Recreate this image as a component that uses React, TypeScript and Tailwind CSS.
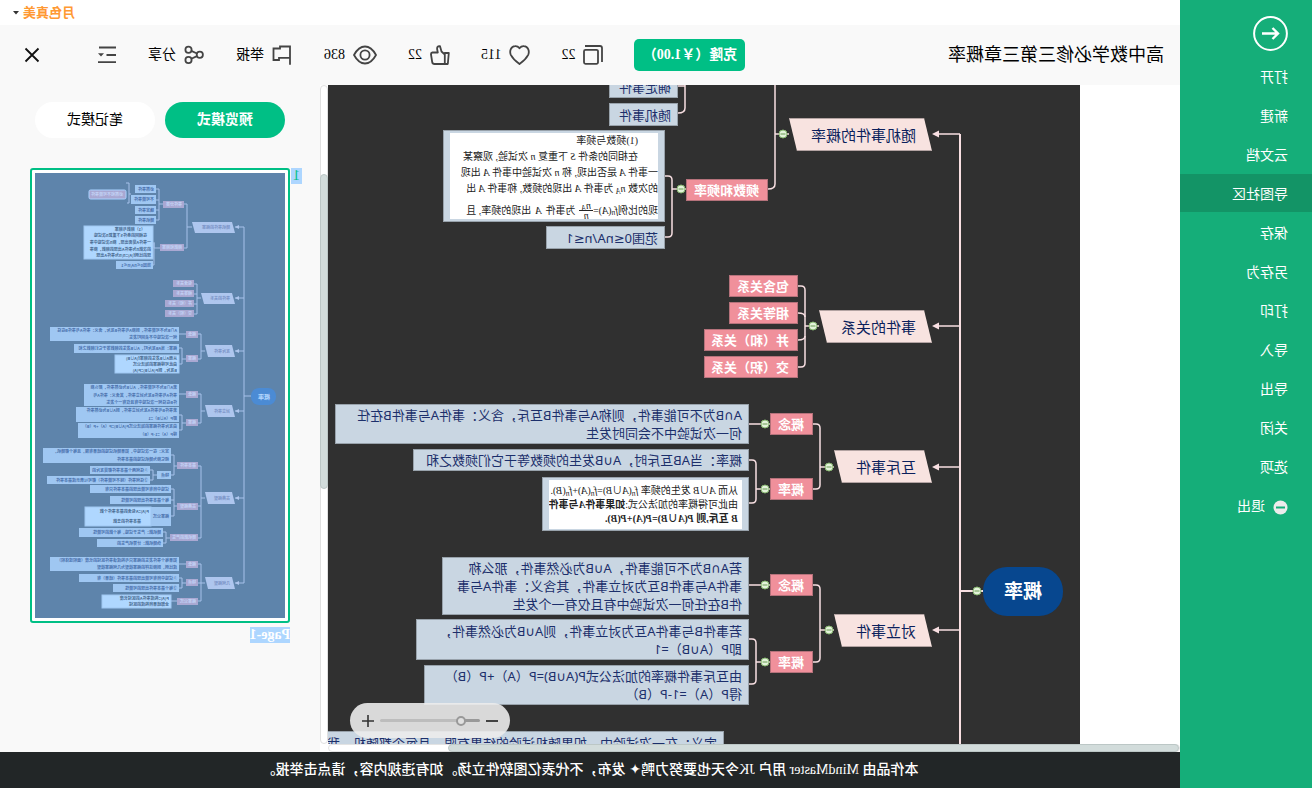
import type { ReactNode } from "react";

const menuItems = ["打开", "新建", "云文档", "导图社区", "保存", "另存为", "打印", "导入", "导出", "关闭", "选项"];

type Kind = "branch" | "pink" | "blue";
type MapNode = { kind: Kind; x: number; y: number; w: number; h: number; lines: string[] };

const nodes: MapNode[] = [
  { kind: "branch", x: 148, y: 33, w: 143, h: 33, lines: ["随机事件的概率"] },
  { kind: "branch", x: 148, y: 225, w: 113, h: 33, lines: ["事件的关系"] },
  { kind: "branch", x: 148, y: 365, w: 98, h: 33, lines: ["互斥事件"] },
  { kind: "branch", x: 148, y: 529, w: 98, h: 33, lines: ["对立事件"] },
  { kind: "pink", x: 312, y: 94, w: 82, h: 22, lines: ["频数和频率"] },
  { kind: "pink", x: 282, y: 190, w: 69, h: 22, lines: ["包含关系"] },
  { kind: "pink", x: 282, y: 217, w: 69, h: 22, lines: ["相等关系"] },
  { kind: "pink", x: 282, y: 244, w: 94, h: 22, lines: ["并（和）关系"] },
  { kind: "pink", x: 282, y: 271, w: 94, h: 22, lines: ["交（积）关系"] },
  { kind: "pink", x: 267, y: 328, w: 43, h: 22, lines: ["概念"] },
  { kind: "pink", x: 267, y: 393, w: 43, h: 22, lines: ["概率"] },
  { kind: "pink", x: 267, y: 489, w: 43, h: 22, lines: ["概念"] },
  { kind: "pink", x: 267, y: 566, w: 43, h: 22, lines: ["概率"] },
  { kind: "blue", x: 402, y: -9, w: 69, h: 22, lines: ["确定事件"] },
  { kind: "blue", x: 402, y: 18, w: 69, h: 23, lines: ["随机事件"] },
  { kind: "blue", x: 415, y: 141, w: 119, h: 23, lines: ["范围0≤nA/n≤1"] },
  { kind: "blue", x: 331, y: 319, w: 414, h: 40, lines: ["A∩B为不可能事件，则称A与事件B互斥，含义：事件A与事件B在任", "何一次试验中不会同时发生"] },
  { kind: "blue", x: 331, y: 364, w: 336, h: 22, lines: ["概率：当AB互斥时，A∪B发生的频数等于它们频数之和"] },
  { kind: "blue", x: 331, y: 472, w: 307, h: 58, lines: ["若A∩B为不可能事件，A∪B为必然事件，那么称", "事件A与事件B互为对立事件，其含义：事件A与事", "件B在任何一次试验中有且仅有一个发生"] },
  { kind: "blue", x: 331, y: 534, w: 333, h: 41, lines: ["若事件B与事件A互为对立事件，则A∪B为必然事件，", "即P（A∪B）=1"] },
  { kind: "blue", x: 331, y: 580, w: 325, h: 40, lines: ["由互斥事件概率的加法公式P(A∪B)=P（A）+P（B）", "得P（A）=1-P（B）"] },
  { kind: "blue", x: 356, y: 646, w: 460, h: 24, lines: ["定义：在一次试验中，如果随机试验的结果有限，且每个都随机，我们"] },
];

const nodeClass: Record<Kind, string> = {
  branch:
    "bg-[#f8e3e0] border-y border-[#b3a3a2] pl-4 text-[15px] leading-5 text-[#0b1f5c] [clip-path:polygon(8px_0,100%_0,calc(100%-8px)_100%,0_100%)]",
  pink: "bg-[#f0909b] border border-[#b5727b] pl-2 text-[13px] leading-[18px] font-bold text-white",
  blue: "bg-[#c9d6e2] border border-[#98a2ab] pl-1.5 text-[13px] leading-[18px] text-[#1c2f6b]",
};

const folds = [
  [103, 506], [297, 49], [267, 241], [251, 382], [251, 545],
  [399, 104], [315, 339], [315, 404], [315, 500], [315, 577],
];

const wires = [
  "M97 506H120", "M120 49V700", "M120 49H142", "M120 241H142", "M120 382H142", "M120 545H142",
  "M291 49H305", "M305 0V99Q305 104 312 104",
  "M395 0V23Q395 28 402 28", "M395 1H402",
  "M394 104H408", "M415 91H412Q408 91 408 95V148Q408 152 412 152H415",
  "M261 241H275", "M282 201H279Q275 201 275 205V278Q275 282 279 282H282", "M275 232Q275 228 282 228", "M275 251Q275 255 282 255",
  "M246 382H260", "M267 339H264Q260 339 260 343V400Q260 404 264 404H267",
  "M246 545H260", "M267 500H264Q260 500 260 504V573Q260 577 264 577H267",
  "M310 339H331", "M310 404H324", "M331 375H328Q324 375 324 379V414Q324 418 328 418H331",
  "M310 500H331", "M310 577H324", "M331 554H328Q324 554 324 558V595Q324 599 328 599H331",
];

// kind, x, y, w, h, rows of text
type Mini = [Kind | "white", number, number, number, number, string[]];

const miniNodes: Mini[] = [
  ["branch", 50, 49, 43, 11, ["随机事件的概率"]],
  ["branch", 50, 120, 34, 11, ["事件的关系"]],
  ["branch", 50, 172, 30, 12, ["互斥事件"]],
  ["branch", 50, 232, 30, 12, ["对立事件"]],
  ["branch", 50, 319, 30, 12, ["古典概型"]],
  ["branch", 50, 404, 30, 12, ["几何概型"]],
  ["pink", 101, 28, 21, 7, ["事件分类"]],
  ["pink", 101, 71, 24, 7, ["频数和频率"]],
  ["pink", 91, 107, 21, 7, ["包含关系"]],
  ["pink", 91, 117, 21, 7, ["相等关系"]],
  ["pink", 91, 127, 29, 7, ["并（和）关系"]],
  ["pink", 91, 137, 29, 7, ["交（积）关系"]],
  ["pink", 87, 158, 12, 7, ["概念"]],
  ["pink", 87, 182, 12, 7, ["概率"]],
  ["pink", 87, 218, 12, 7, ["概念"]],
  ["pink", 87, 246, 12, 7, ["概率"]],
  ["pink", 87, 289, 21, 7, ["基本事件"]],
  ["pink", 87, 330, 21, 7, ["古典概型"]],
  ["pink", 87, 361, 28, 7, ["随机数的产生"]],
  ["pink", 87, 388, 12, 7, ["概念"]],
  ["pink", 87, 406, 12, 7, ["特点"]],
  ["pink", 87, 425, 21, 7, ["概率公式"]],
  ["blue", 129, 12, 21, 8, ["必然事件"]],
  ["blue", 129, 22, 25, 9, ["不可能事件"]],
  ["blue", 129, 33, 21, 8, ["确定事件"]],
  ["blue", 129, 43, 21, 8, ["随机事件"]],
  ["white", 132, 53, 69, 33, ["　　（1）频数与频率", "　在相同的条件S下重复n次试验", "一事件A是否出现，称n次试验中事", "的次数n为事件A出现的频数，称事", "现的比例f(A)=n/n为事件A出现"]],
  ["blue", 132, 88, 37, 8, ["范围0≤nA/n≤1"]],
  ["blue", 106, 154, 129, 14, ["A∩B为不可能事件，则称A与事件B互斥，含义：事件A与事件B在任", "何一次试验中不会同时发生"]],
  ["blue", 106, 171, 105, 9, ["概率：当AB互斥时，A∪B发生的频数等于它们频数之和"]],
  ["white", 106, 182, 64, 18, ["从而A∪B发生的频率f(A∪B)", "由此可得概率的加法公式", "B互斥，则P(A∪B)=P(A)"]],
  ["blue", 106, 211, 95, 22, ["若A∩B为不可能事件，A∪B为必然事件，那么称", "事件A与事件B互为对立事件，其含义：事件A与", "件B在任何一次试验中有且仅有一个发生"]],
  ["blue", 106, 234, 103, 15, ["若事件B与事件A互为对立事件，则A∪B为必然事件", "即P（A∪B）=1"]],
  ["blue", 106, 250, 101, 15, ["由互斥事件概率的加法公式P(A∪B)=P（A）+P（B）", "得P（A）=1-P（B）"]],
  ["blue", 114, 275, 128, 15, ["定义：在一次试验中，如果随机试验的结果有限，且每个都随机，", "把它称为随机试验的基本事件"]],
  ["blue", 114, 298, 14, 8, ["特点"]],
  ["blue", 135, 293, 60, 8, ["①任何两个基本事件都是互斥的"]],
  ["blue", 135, 303, 103, 8, ["②任何事件（除不可能事件）都可以表示成基本事件"]],
  ["blue", 114, 312, 81, 8, ["试验中所有可能出现的基本事件只有"]],
  ["blue", 114, 323, 61, 8, ["每个基本事件出现的可能性"]],
  ["blue", 114, 334, 20, 19, ["概率公式"]],
  ["white", 134, 334, 66, 19, ["P(A)=A包含的基本事件个数", "　　基本事件的总数"]],
  ["blue", 122, 355, 84, 9, ["随机数：产生于试验，每个数的可能性"]],
  ["blue", 122, 366, 66, 8, ["伪随机数：计算机产生的"]],
  ["blue", 106, 384, 129, 14, ["如果每个事件发生的概率只与构成该事件区域的长度（面积或体积）", "成比例，则称这样的概率模型为几何概率模型"]],
  ["blue", 106, 401, 100, 8, ["①试验中所有可能出现的基本事件（结果）有"]],
  ["blue", 106, 411, 66, 8, ["②每个基本事件出现的可能性"]],
  ["white", 114, 422, 69, 13, ["P(A)=构成事件A的区域长度", "全部结果所构成的区域"]],
];

const miniFill: Record<Mini[0], string> = {
  branch: "fill-[#aec6ee]",
  pink: "fill-[#a9a8d2]",
  blue: "fill-[#9fc7f2]",
  white: "fill-[#afd7ff]",
};
const miniInk: Record<Mini[0], string> = {
  branch: "fill-[#7a93c6]",
  pink: "fill-[#c3d3f6]",
  blue: "fill-[#4a71ad]",
  white: "fill-[#47698f]",
};

const miniWires =
  "M34 223H41M41 54V410M41 54H50M41 125H50M41 178H50M41 238H50M41 325H50M41 410H50" +
  "M93 54H98M101 31H98V75H101M122 31H126M129 16H126V47H129M126 27H129M126 37H129M154 21H156M159 10H156V30H158" +
  "M125 75H131V70M131 69V92H132M84 125H88M91 111H88V141H91M88 121H91M88 131H91" +
  "M80 178H84M87 161H84V186H87M99 161H106M99 186H103M106 175H103V191H106" +
  "M80 238H84M87 221H84V250H87M99 221H106M99 250H103M106 242H103V257H106" +
  "M80 325H84M87 293H84V365H87M84 333H87M108 293H111M114 282H111V302H114M128 302H132M135 297H132V307H135" +
  "M108 333H111M114 316H111V343H114M111 327H114M115 365H119M122 359H119V370H122" +
  "M80 410H84M87 391H84V428H87M84 410H87M99 391H106M99 410H103M106 405H103V415H106M108 428H114";

function Icon({ w, children }: { w: number; children: ReactNode }) {
  return (
    <svg width={w} height="20" viewBox={`0 0 ${w} 20`} fill="none" stroke="#444" strokeWidth="1.8" strokeLinejoin="round" aria-hidden="true">
      {children}
    </svg>
  );
}

function Sidebar() {
  return (
    <aside className="w-[132px] shrink-0 bg-[#15ae79] text-white">
      <button aria-label="返回" className="mt-4 ml-6 block">
        <svg width="35" height="35" viewBox="0 0 35 35" fill="none" stroke="currentColor" aria-hidden="true">
          <circle cx="17.5" cy="17.5" r="16.4" strokeWidth="2" />
          <path d="M26 17.500H10M15.500 12L10 17.500L15.500 23" strokeWidth="2.400" />
        </svg>
      </button>
      <nav className="mt-1.5 flex flex-col gap-px text-sm">
        {menuItems.map((item) => (
          <button
            key={item}
            className={item === "导图社区" ? "h-[38px] bg-[#139466] pt-1 pl-6 text-left" : "h-[38px] pt-1 pl-6 text-left"}
          >
            {item}
          </button>
        ))}
        <button className="flex h-[38px] items-center gap-2 pt-1 pl-6 text-left">
          <svg width="15" height="15" viewBox="0 0 15 15" aria-hidden="true">
            <circle cx="7.5" cy="7.5" r="7" fill="#ececec" />
            <path d="M3 7.500H12" stroke="#15ae79" strokeWidth="2" />
          </svg>
          退出
        </button>
      </nav>
    </aside>
  );
}

function Header() {
  return (
    <header className="flex h-[60px] shrink-0 items-center bg-[#f9f9f9] pr-6 pl-4 text-sm text-black">
      <h1 className="text-lg">高中数学必修三第三章概率</h1>
      <div className="ml-auto flex items-center gap-8">
        <div className="flex items-center gap-[31px]">
          <button className="h-8 w-[111px] rounded-[5px] bg-[#00bf85] font-bold whitespace-nowrap text-white">
            <span className="-mx-2">克隆（￥1.00）</span>
          </button>
          <button className="flex items-center gap-2">
            <Icon w={20}>
              <rect x="5" y="4.8" width="14" height="14" rx="1.500" />
              <path d="M1 17V3Q1 1 3 1H18" />
            </Icon>
            22
          </button>
          <button className="flex items-center gap-2">
            <Icon w={21}>
              <path d="M10.500 19C7 16.500 3.500 13 1.800 9.800C.2 6 2 1.500 6 1.200C8 1 9.500 2 10.500 3.200C11.500 2 13 1 15 1.200C19 1.500 20.800 6 19.200 9.800C17.500 13 14 16.500 10.500 19Z" />
            </Icon>
            115
          </button>
          <button className="flex items-center gap-2">
            <Icon w={20}>
              <path d="M1.200 8H5.200V19H2.200ZM5.200 9.500L8.500 6.500L10 1.200C12.300 .8 13.200 2.300 12.800 4.500L12.200 7.500H17.500Q19.200 7.800 19 9.500L17.800 17Q17.500 19 15.500 19H5.200" />
            </Icon>
            22
          </button>
          <div className="flex items-center gap-2">
            <Icon w={24}>
              <path d="M1 10C4 4.500 7.500 1.500 12 1.500S20 4.500 23 10C20 15.500 16.500 18.500 12 18.500S4 15.500 1 10Z" />
              <circle cx="12" cy="10" r="4.600" />
            </Icon>
            836
          </div>
        </div>
        <div className="flex items-center gap-8">
          <button className="flex items-center gap-2">
            <Icon w={20}>
              <path d="M2 19.800V1.500H12V3.500H18.500V15H13V12.800H2" strokeLinejoin="miter" />
            </Icon>
            举报
          </button>
          <button className="flex items-center gap-2">
            <Icon w={20}>
              <circle cx="4.200" cy="9.800" r="3.100" />
              <circle cx="15.500" cy="4.700" r="3.100" />
              <circle cx="15.500" cy="15" r="3.100" />
              <path d="M7 8.500L12.700 5.900M7 11.100L12.700 13.800" />
            </Icon>
            分享
          </button>
          <button aria-label="目录">
            <Icon w={18}>
              <path d="M0 2.500H17M0 10H9.500M0 17.200H18" />
              <path d="M12 8.200H18L15 11.500Z" fill="#444" stroke="none" />
            </Icon>
          </button>
          <button aria-label="关闭" className="ml-[26px]">
            <svg width="16" height="16" viewBox="0 0 16 16" stroke="#111" strokeWidth="1.800" aria-hidden="true">
              <path d="M1.500 1.500L14.500 14.500M14.500 1.500L1.500 14.500" />
            </svg>
          </button>
        </div>
      </div>
    </header>
  );
}

function Node({ node }: { node: MapNode }) {
  return (
    <div
      className={`absolute flex flex-col justify-center overflow-hidden whitespace-nowrap ${nodeClass[node.kind]}`}
      style={{ left: node.x, top: node.y, width: node.w, height: node.h }}
    >
      {node.lines.map((line) => (
        <p key={line}>{line}</p>
      ))}
    </div>
  );
}

function MindMap() {
  return (
    <div className="relative flex-1 overflow-hidden bg-[#303030] font-['Noto_Sans','DejaVu_Sans','Noto_Sans_CJK_SC',sans-serif]">
      <svg className="absolute inset-0" width="752" height="100%" fill="none" stroke="#f8dfe2" strokeWidth="1.500" aria-hidden="true">
        {wires.map((d) => (
          <path key={d} d={d} />
        ))}
        <path d="M120 49V700M97 506H120" strokeWidth="2" />
        {[49, 241, 382, 545].map((y) => (
          <path key={y} d={`M148 ${y}L141 ${y - 3.5}V${y + 3.5}Z`} fill="#f8dfe2" stroke="none" />
        ))}
        {folds.map(([x, y]) => (
          <g key={`${x}-${y}`}>
            <circle cx={x} cy={y} r="4" fill="#e3f3da" stroke="#86b66f" strokeWidth="1" />
            <path d={`M${x - 2.5} ${y}H${x + 2.5}`} stroke="#6a9a55" strokeWidth="1" />
          </g>
        ))}
      </svg>
      <div className="absolute top-[482px] left-[17px] flex h-[49px] w-20 items-center justify-center rounded-3xl bg-[#07478f] text-[19px] font-bold text-white">
        概率
      </div>
      {nodes.map((node) => (
        <Node key={`${node.x}-${node.y}`} node={node} />
      ))}
      <div className="absolute top-[45px] left-[415px] h-[92px] w-[222px] border border-[#98a2ab] bg-[#c9d6e2] px-1.5 py-0.5 font-['Liberation_Serif','Noto_Sans_CJK_SC',serif] text-[10px] leading-4 text-[#222]">
        <div className="h-[86px] overflow-hidden bg-white whitespace-nowrap">
          <p className="pl-5">(1)频数与频率</p>
          <p className="pl-5">在相同的条件 <i>S</i> 下重复 <i>n</i> 次试验, 观察某</p>
          <p>一事件 <i>A</i> 是否出现, 称 <i>n</i> 次试验中事件 <i>A</i> 出现</p>
          <p>的次数 <i>n<sub>A</sub></i> 为事件 <i>A</i> 出现的频数, 称事件 <i>A</i> 出</p>
          <p className="flex items-center pt-1">
            现的比例<i>f<sub>n</sub></i>(<i>A</i>)=
            <span className="mr-1 inline-flex flex-col text-center leading-[9px] italic">
              <span className="border-b border-[#222] px-0.5">n<sub>A</sub></span>
              <span>n</span>
            </span>
            为事件 <i className="mx-1">A</i> 出现的频率,&nbsp;且
          </p>
        </div>
      </div>
      <div className="absolute top-[392px] left-[331px] h-[54px] w-[207px] border border-[#98a2ab] bg-[#c9d6e2] px-1.5 py-0.5 font-['Liberation_Serif','Noto_Sans_CJK_SC',serif] text-[10px] leading-[14px] text-[#222]">
        <div className="h-[49px] overflow-hidden bg-white pt-1 pl-1 whitespace-nowrap">
          <p>从而 <i>A</i>∪<i>B</i> 发生的频率 <i>f<sub>n</sub></i>(<i>A</i>∪<i>B</i>)=<i>f<sub>n</sub></i>(<i>A</i>)+<i>f<sub>n</sub></i>(<i>B</i>).</p>
          <p>由此可得概率的加法公式:<b>如果事件<i>A</i>与事件</b></p>
          <p className="font-bold"><i>B</i> 互斥,则 <i>P</i>(<i>A</i>∪<i>B</i>)=<i>P</i>(<i>A</i>)+<i>P</i>(<i>B</i>).</p>
        </div>
      </div>
      <div className="absolute right-[22px] bottom-1.5 flex h-[35px] w-40 items-center justify-center gap-1.5 rounded-full bg-[#ececec]/90">
        <button aria-label="缩小">
          <svg width="12" height="14" viewBox="0 0 12 14" stroke="#333" strokeWidth="1.800" aria-hidden="true">
            <path d="M0 7H12" />
          </svg>
        </button>
        <input
          type="range"
          aria-label="缩放"
          defaultValue={16}
          className="h-[3px] w-[100px] appearance-none rounded-full bg-linear-to-r from-[#999] from-20% to-[#bdbdbd] to-20% [&::-webkit-slider-thumb]:size-[10px] [&::-webkit-slider-thumb]:appearance-none [&::-webkit-slider-thumb]:rounded-full [&::-webkit-slider-thumb]:border-2 [&::-webkit-slider-thumb]:border-solid [&::-webkit-slider-thumb]:border-[#999] [&::-webkit-slider-thumb]:bg-[#e0e0e0]"
        />
        <button aria-label="放大">
          <svg width="12" height="14" viewBox="0 0 12 14" stroke="#333" strokeWidth="1.600" aria-hidden="true">
            <path d="M0 7H12M6 1V13" />
          </svg>
        </button>
      </div>
    </div>
  );
}

function Thumbnail() {
  return (
    <svg viewBox="0 0 250 445" className="block w-full bg-[#5e84ab]" fontSize="4" fontWeight="bold" aria-hidden="true">
      <path d={miniWires} fill="none" stroke="#a6c1ea" strokeWidth="1" />
      <rect x="9" y="215" width="25" height="17" rx="8" fill="#4b8bd4" />
      <text x="15" y="226" fontSize="6" fill="#b5d8ff">概率</text>
      <rect x="159" y="17" width="37" height="9" rx="1.500" fill="#a9a8d2" stroke="#a9d2ff" />
      <text x="162" y="23" fill="#c3d3f6">必然和不可能事件</text>
      {[54, 125, 178, 238, 325, 410].map((y) => (
        <path key={y} d={`M50 ${y}L46 ${y - 2}V${y + 2}Z`} fill="#aec6ee" />
      ))}
      {miniNodes.map(([kind, x, y, w, h, rows]) => (
        <g key={`${x}-${y}`}>
          {kind === "branch" ? (
            <path d={`M${x + 3} ${y}H${x + w}L${x + w - 3} ${y + h}H${x}Z`} className={miniFill[kind]} />
          ) : (
            <rect x={x} y={y} width={w} height={h} className={miniFill[kind]} stroke={kind === "white" ? "#9fc7f2" : "none"} />
          )}
          {rows.map((row, i) => (
            <text
              key={i}
              x={kind === "branch" ? x + 5 : x + 2}
              y={y + (h / rows.length) * (i + 0.5) + 1.5}
              className={miniInk[kind]}
            >
              {row}
            </text>
          ))}
        </g>
      ))}
    </svg>
  );
}

function PreviewPanel() {
  return (
    <section className="w-80 shrink-0 bg-[#f9f9f9] pt-[17px]">
      <div className="ml-[35px] flex gap-2.5 text-sm">
        <button className="h-9 w-[120px] rounded-full bg-[#00bf85] font-bold text-white">预览模式</button>
        <button className="h-9 w-[120px] rounded-full bg-white text-black">笔记模式</button>
      </div>
      <div className="mt-[30px] flex items-start justify-end pr-[30px] text-sm">
        <span className="mr-px bg-[#add6ff] px-0.5 leading-4 text-[#00bf85]">1</span>
        <div className="w-[260px]">
          <div className="rounded-[3px] border-2 border-[#00bf85] bg-white p-[3px] font-['Noto_Sans_CJK_SC',sans-serif]">
            <Thumbnail />
          </div>
          <p className="mt-1 w-fit bg-[#add6ff] leading-4 font-bold text-white">Page-1</p>
        </div>
      </div>
    </section>
  );
}

export default function App() {
  return (
    <div className="flex h-screen -scale-x-100 overflow-hidden bg-white font-['Liberation_Serif','Noto_Sans_CJK_SC',serif]">
      <Sidebar />
      <div className="flex min-w-0 flex-1 flex-col">
        <div className="flex h-[25px] shrink-0 items-center justify-end gap-1 pr-[13px]">
          <span className="text-[13px] leading-4 font-bold text-[#ff9933]">月色真美</span>
          <svg width="6" height="4" viewBox="0 0 6 4" aria-hidden="true">
            <path d="M0 0H6L3 3.500Z" fill="#333" />
          </svg>
        </div>
        <Header />
        <main className="flex min-h-0 flex-1">
          <div className="flex min-w-0 flex-1 flex-col">
            <div className="flex min-h-0 flex-1">
              <div className="w-[100px] shrink-0 bg-white" />
              <MindMap />
            </div>
            <div className="h-2 shrink-0 rounded border border-[#e3e3e3] bg-white">
              <div className="-mt-px h-2 w-[86%] rounded border border-[#bcc7c6] bg-[#d2dcdb]" />
            </div>
          </div>
          <div className="mb-2 w-2 shrink-0 rounded border border-[#e0e0e0] bg-white pt-[88px]">
            <div className="-mx-px h-[315px] rounded border border-[#bcc7c6] bg-[#d2dcdb]" />
          </div>
          <PreviewPanel />
        </main>
        <footer className="flex h-9 shrink-0 items-center justify-center bg-[#222627] text-sm font-medium text-white">
          本作品由 MindMaster 用户 JK今天也要努力鸭✦ 发布，不代表亿图软件立场。如有违规内容，请点击举报。
        </footer>
      </div>
    </div>
  );
}
